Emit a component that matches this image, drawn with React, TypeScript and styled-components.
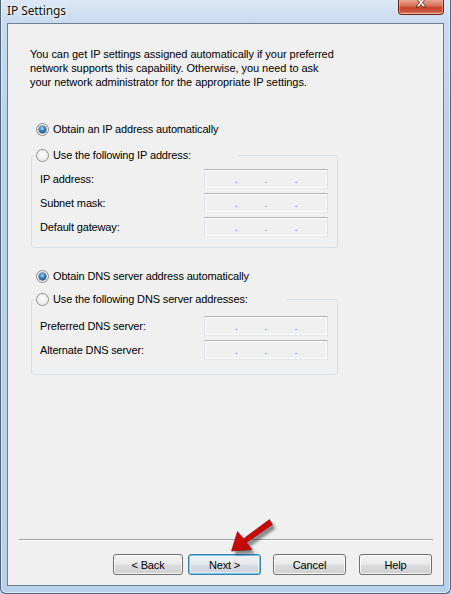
import React from "react";
import styled, { createGlobalStyle, css } from "styled-components";

const GlobalStyle = createGlobalStyle`
  html, body { margin: 0; padding: 0; background: #bfd4ec; overflow: hidden; }
  * { box-sizing: border-box; }
`;

const Window = styled.div`
  position: relative;
  width: 451px;
  height: 594px;
  display: flex;
  flex-direction: column;
  background: linear-gradient(180deg, #dce8f5 0px, #c9dbef 22px, #bcd2ec 120px, #b9d0ea 100%);
  border: 1px solid #4f637b;
  border-top: none;
  border-radius: 0 0 6px 6px;
  box-shadow: inset 1px 0 0 rgba(255, 255, 255, 0.55), inset -1px 0 0 rgba(255, 255, 255, 0.55),
    inset 0 -1px 0 rgba(255, 255, 255, 0.55);
  font-family: "Liberation Sans", Arial, sans-serif;
  letter-spacing: -0.15px;
  color: #000;
`;

const TitleBar = styled.div`
  height: 23px;
  flex: 0 0 23px;
  display: flex;
  align-items: flex-start;
  justify-content: space-between;
  padding: 0 6px 0 6px;
`;

const Title = styled.div`
  font-family: "Noto Sans", "Open Sans", sans-serif;
  font-size: 12px;
  letter-spacing: -0.1px;
  line-height: 22px;
  color: #111;
  text-shadow: 0 0 6px rgba(255, 255, 255, 0.95), 0 0 3px rgba(255, 255, 255, 0.9);
`;

const CloseButton = styled.div`
  width: 46px;
  height: 15px;
  display: flex;
  justify-content: center;
  align-items: flex-start;
  overflow: hidden;
  border: 1px solid #6e2214;
  border-top: none;
  border-radius: 0 0 4px 4px;
  background: linear-gradient(180deg, #e9a48f 0%, #d6735a 40%, #c4452b 55%, #c9523a 80%, #e08a6c 100%);
  box-shadow: inset 0 -1px 0 rgba(255, 220, 200, 0.6), inset 1px 0 0 rgba(255, 200, 180, 0.4),
    inset -1px 0 0 rgba(255, 200, 180, 0.4);
`;

const Client = styled.div`
  flex: 1 1 auto;
  margin: 0 6px 7px 6px;
  border: 1px solid #6a7d93;
  background: #f0f0f0;
  display: flex;
  flex-direction: column;
  min-height: 0;
`;

const Intro = styled.p`
  margin: 23px 0 0 22px;
  font-size: 11px;
  line-height: 14px;
  letter-spacing: -0.05px;
`;

const RadioRow = styled.label<{ $mt: number }>`
  display: flex;
  align-items: center;
  gap: 4px;
  height: 14px;
  margin: ${(p) => p.$mt}px 0 0 28px;
  font-size: 11px;
  line-height: 14px;
`;

const RadioMark = styled.span<{ $checked?: boolean }>`
  position: relative;
  flex: 0 0 13px;
  width: 13px;
  height: 13px;
  border-radius: 50%;
  border: 1px solid #8a8c8f;
  background: radial-gradient(circle at 50% 40%, #ffffff 0%, #f2f2f2 40%, #d4d4d4 100%);
  box-shadow: inset 0 0 0 1px rgba(255, 255, 255, 0.7);
  ${(p) =>
    p.$checked &&
    css`
      &::after {
        content: "";
        position: absolute;
        left: 2px;
        top: 2px;
        width: 7px;
        height: 7px;
        border-radius: 50%;
        background: radial-gradient(circle at 45% 35%, #a6dcfb 0%, #3d8dc9 40%, #1b4f7d 75%, #163a5a 100%);
        box-shadow: 0 0 0 0.5px #1d3f60;
      }
    `}
`;

const GroupBox = styled.fieldset<{ $mt: number }>`
  margin: ${(p) => p.$mt}px 0 0 23px;
  padding: 0;
  width: 307px;
  min-width: 0;
  border: 1px solid #d5dfe5;
  border-radius: 3px;
`;

const GroupLegend = styled.legend<{ $w: number }>`
  display: flex;
  align-items: center;
  gap: 4px;
  width: ${(p) => p.$w}px;
  height: 14px;
  margin-left: 3px;
  padding: 0 0 0 1px;
  font-size: 11px;
  line-height: 14px;
`;

const FieldGrid = styled.div<{ $pt: number; $pb: number }>`
  display: grid;
  grid-template-columns: 164px 124px;
  grid-auto-rows: 20px;
  row-gap: 4px;
  padding: ${(p) => p.$pt}px 9px ${(p) => p.$pb}px 8px;
  align-items: center;
`;

const FieldLabel = styled.span`
  font-size: 11px;
  line-height: 14px;
`;

const IpField = styled.div`
  height: 20px;
  display: flex;
  justify-content: center;
  align-items: flex-end;
  gap: 27px;
  padding-bottom: 3px;
  border: 1px solid;
  border-color: #b0b3b8 #dcdfe3 #e3e6ea #dcdfe3;
  background: #f0f0f0;
  box-shadow: inset 0 0 0 1px #ffffff;
`;

const IpDot = styled.span`
  font-size: 11px;
  line-height: 11px;
  color: #7d6c8c;
`;

const Spacer = styled.div`
  flex: 1 1 auto;
`;

const Separator = styled.div`
  height: 1px;
  margin: 0 10px 0 11px;
  background: #a0a0a0;
  box-shadow: 0 1px 0 #ffffff;
`;

const ButtonRow = styled.div`
  display: flex;
  justify-content: flex-end;
  padding: 0 11px 0 0;
  margin: 14px 0 10px 0;
`;

const WizardButton = styled.button<{ $w: number; $ml: number; $focused?: boolean }>`
  width: ${(p) => p.$w}px;
  height: 21px;
  margin-left: ${(p) => p.$ml}px;
  padding: 0;
  font-family: "Liberation Sans", Arial, sans-serif;
  font-size: 11px;
  letter-spacing: -0.15px;
  color: #000;
  border: 1px solid #707070;
  border-radius: 3px;
  background: linear-gradient(180deg, #f2f2f2 0%, #ebebeb 48%, #dddddd 52%, #cfcfcf 100%);
  box-shadow: inset 0 0 0 1px rgba(255, 255, 255, 0.75);
  ${(p) =>
    p.$focused &&
    css`
      border-color: #3c7fb1;
      background: linear-gradient(180deg, #eef2f5 0%, #e6eaee 48%, #d8dde2 52%, #ccd3d9 100%);
      box-shadow: inset 0 0 0 1px #6fc6f2, inset 0 0 0 2px rgba(255, 255, 255, 0.5);
    `}
`;

const ArrowOverlay = styled.svg`
  position: absolute;
  left: 0;
  top: 0;
  pointer-events: none;
`;

const CloseGlyph = () => (
  <svg width="14" height="12" viewBox="0 0 14 12" style={{ marginTop: -3 }}>
    <path
      d="M2 1 L5 1 L7 3.5 L9 1 L12 1 L8.6 5.5 L12 10 L9 10 L7 7.5 L5 10 L2 10 L5.4 5.5 Z"
      fill="#ffffff"
      stroke="#5a1a10"
      strokeWidth="0.9"
      strokeLinejoin="round"
    />
  </svg>
);

const IpBox = () => (
  <IpField>
    <IpDot>.</IpDot>
    <IpDot>.</IpDot>
    <IpDot>.</IpDot>
  </IpField>
);

const arrowPts =
  "268.5,519.5 242.5,538.7 236.5,531.5 230.5,551 251,549.5 245.5,542.7 271.5,524.5";

export default function App() {
  return (
    <>
      <GlobalStyle />
      <Window>
        <TitleBar>
          <Title>IP Settings</Title>
          <CloseButton>
            <CloseGlyph />
          </CloseButton>
        </TitleBar>
        <Client>
          <Intro>
            You can get IP settings assigned automatically if your preferred
            <br />
            network supports this capability. Otherwise, you need to ask
            <br />
            your network administrator for the appropriate IP settings.
          </Intro>

          <RadioRow $mt={33}>
            <RadioMark $checked />
            Obtain an IP address automatically
          </RadioRow>
          <GroupBox $mt={12}>
            <GroupLegend $w={202}>
              <RadioMark />
              Use the following IP address:
            </GroupLegend>
            <FieldGrid $pt={7} $pb={10}>
              <FieldLabel>IP address:</FieldLabel>
              <IpBox />
              <FieldLabel>Subnet mask:</FieldLabel>
              <IpBox />
              <FieldLabel>Default gateway:</FieldLabel>
              <IpBox />
            </FieldGrid>
          </GroupBox>

          <RadioRow $mt={21}>
            <RadioMark $checked />
            Obtain DNS server address automatically
          </RadioRow>
          <GroupBox $mt={9}>
            <GroupLegend $w={252}>
              <RadioMark />
              Use the following DNS server addresses:
            </GroupLegend>
            <FieldGrid $pt={10} $pb={14}>
              <FieldLabel>Preferred DNS server:</FieldLabel>
              <IpBox />
              <FieldLabel>Alternate DNS server:</FieldLabel>
              <IpBox />
            </FieldGrid>
          </GroupBox>

          <Spacer />
          <Separator />
          <ButtonRow>
            <WizardButton $w={70} $ml={0}>&lt; Back</WizardButton>
            <WizardButton $w={73} $ml={5} $focused>
              Next &gt;
            </WizardButton>
            <WizardButton $w={73} $ml={12}>Cancel</WizardButton>
            <WizardButton $w={73} $ml={13}>Help</WizardButton>
          </ButtonRow>
        </Client>
        <ArrowOverlay width="451" height="594" viewBox="0 0 451 594">
          <defs>
            <filter id="arrowShadow" x="-20%" y="-20%" width="140%" height="140%">
              <feGaussianBlur stdDeviation="1.6" />
            </filter>
            <linearGradient id="arrowFill" x1="0" y1="0" x2="1" y2="1">
              <stop offset="0" stopColor="#e01010" />
              <stop offset="1" stopColor="#b00000" />
            </linearGradient>
          </defs>
          <polygon points={arrowPts} fill="rgba(0,0,0,0.45)" transform="translate(3,4)" filter="url(#arrowShadow)" />
          <polygon points={arrowPts} fill="url(#arrowFill)" stroke="#8c0000" strokeWidth="0.6" strokeLinejoin="round" />
        </ArrowOverlay>
      </Window>
    </>
  );
}
